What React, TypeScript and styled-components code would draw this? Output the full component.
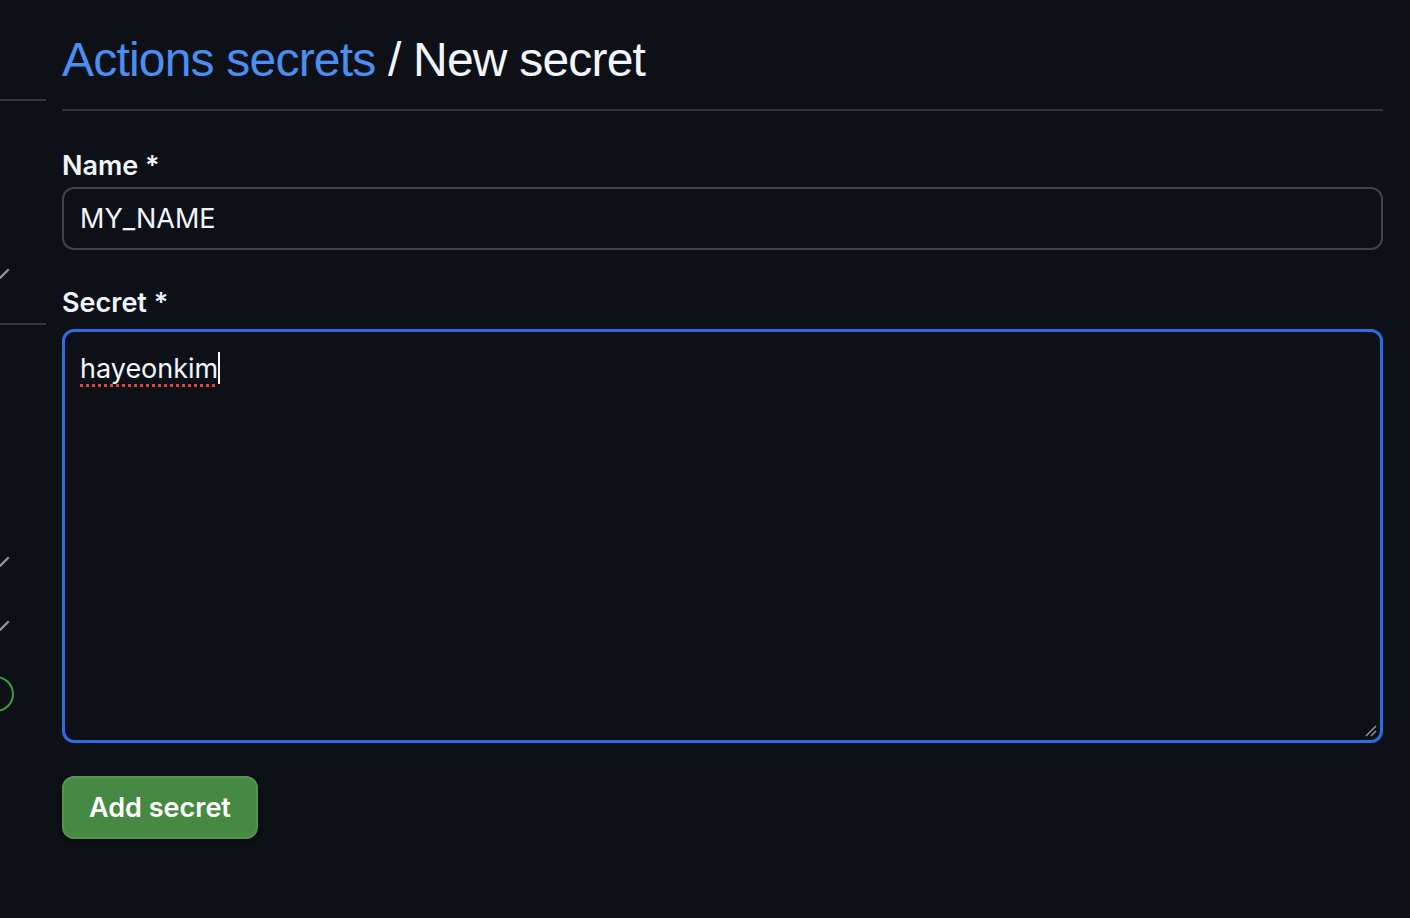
import React from "react";
import styled, { createGlobalStyle } from "styled-components";

const Global = createGlobalStyle`
  html, body { margin: 0; padding: 0; background: #0d1117; }
  body { font-family: Inter, "Liberation Sans", sans-serif; color: #e6edf3; }
  * { box-sizing: border-box; }
`;

const Page = styled.div`
  display: flex;
  gap: 16px;
  width: 1410px;
  height: 918px;
  overflow: hidden;
  background: #0d1117;
`;

const Sidebar = styled.aside`
  width: 46px;
  flex: none;
  position: relative;
`;

const SideRule = styled.div<{ $top: number }>`
  position: absolute;
  left: 0;
  right: 0;
  top: ${(p) => p.$top}px;
  height: 2px;
  background: #30363d;
`;

const SideMark = styled.svg<{ $top: number }>`
  position: absolute;
  left: 0;
  top: ${(p) => p.$top}px;
`;

const Main = styled.main`
  flex: 1;
  padding: 30px 27px 0 0;
  display: flex;
  flex-direction: column;
`;

const Heading = styled.h2`
  margin: 0;
  font-family: "Liberation Sans", Inter, sans-serif;
  font-size: 48px;
  font-weight: 400;
  line-height: 60px;
  letter-spacing: -0.8px;
  padding-bottom: 19px;
  border-bottom: 2px solid #30363d;
  color: #f0f6fc;
`;

const Crumb = styled.a`
  color: #4c8ef0;
  text-decoration: none;
`;

const Field = styled.div<{ $mt: number; $gap: number }>`
  display: flex;
  flex-direction: column;
  gap: ${(p) => p.$gap}px;
  margin-top: ${(p) => p.$mt}px;
`;

const Label = styled.label`
  font-size: 27px;
  font-weight: 600;
  line-height: 34px;
  color: #f0f6fc;
`;

const Input = styled.div`
  height: 63px;
  border: 2px solid #3d444d;
  border-radius: 12px;
  padding: 0 16px;
  display: flex;
  align-items: center;
  font-size: 27px;
  color: #f0f6fc;
  background: #0d1117;
`;

const SecretBox = styled.div`
  position: relative;
  height: 414px;
  border: 3px solid #2f6be0;
  border-radius: 12px;
  padding: 19px 15px;
  font-size: 27px;
  line-height: 36px;
  color: #f0f6fc;
  background: #0d1117;
`;

const Misspelled = styled.span`
  text-decoration: underline dotted #e0443e;
  text-decoration-thickness: 3px;
  text-underline-offset: 6px;
`;

const Caret = styled.span`
  display: inline-block;
  width: 2px;
  height: 32px;
  background: #f0f6fc;
  vertical-align: -6px;
`;

const Grip = styled.svg`
  position: absolute;
  right: 2px;
  bottom: 2px;
`;

const Button = styled.button`
  margin-top: 33px;
  align-self: flex-start;
  height: 63px;
  padding: 0 25px;
  border: 2px solid #529550;
  border-radius: 12px;
  background: #468943;
  color: #ffffff;
  font-family: Inter, "Liberation Sans", sans-serif;
  font-size: 27px;
  font-weight: 600;
  box-shadow: 0 2px 4px rgba(0, 0, 0, 0.4);
`;

const Check = ({ top }: { top: number }) => (
  <SideMark $top={top} width="10" height="12" viewBox="0 0 10 12">
    <path d="M0 10 L8 2" stroke="#8b949e" strokeWidth="2.4" strokeLinecap="round" />
  </SideMark>
);

export default function App() {
  return (
    <>
      <Global />
      <Page>
        <Sidebar>
          <SideRule $top={99} />
          <Check top={268} />
          <SideRule $top={323} />
          <Check top={556} />
          <Check top={620} />
          <SideMark $top={674} width="16" height="40" viewBox="0 0 16 40">
            <circle cx="-4" cy="20" r="17" fill="none" stroke="#3f9b3f" strokeWidth="2" />
          </SideMark>
        </Sidebar>
        <Main>
          <Heading>
            <Crumb href="#">Actions secrets</Crumb> / New secret
          </Heading>
          <Field $mt={38} $gap={4}>
            <Label>Name *</Label>
            <Input>MY_NAME</Input>
          </Field>
          <Field $mt={36} $gap={9}>
            <Label>Secret *</Label>
            <SecretBox>
              <Misspelled>hayeonkim</Misspelled>
              <Caret />
              <Grip width="14" height="14" viewBox="0 0 14 14">
                <path d="M2 12 L12 2 M7 12 L12 7" stroke="#8b949e" strokeWidth="1.5" />
              </Grip>
            </SecretBox>
          </Field>
          <Button>Add secret</Button>
        </Main>
      </Page>
    </>
  );
}
